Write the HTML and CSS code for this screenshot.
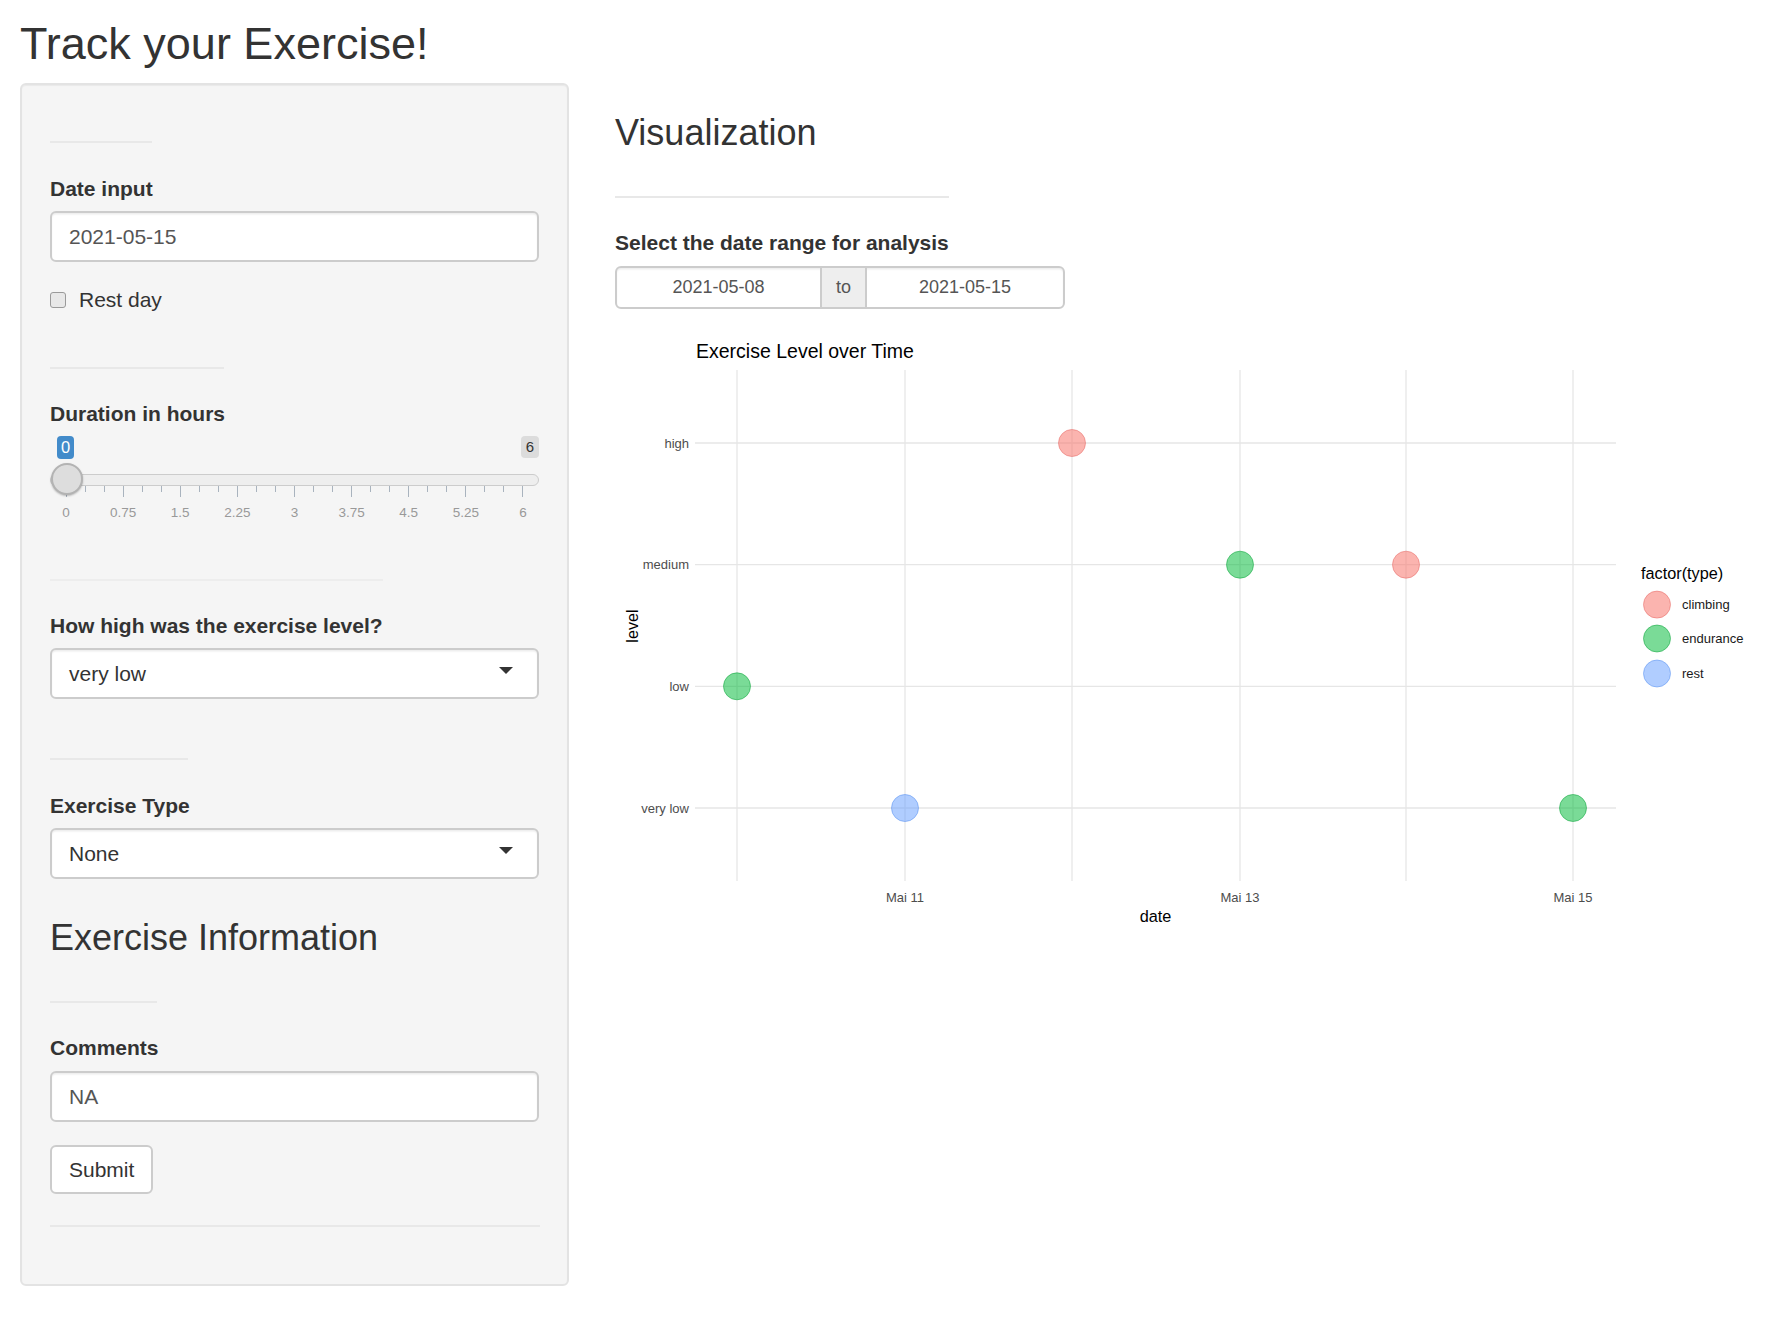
FILE: index.html
```html
<!DOCTYPE html>
<html lang="en">
<head>
<meta charset="utf-8">
<title>Track your Exercise!</title>
<link rel="stylesheet" href="styles.css">
</head>
<body>
<h2 class="page-title">Track your Exercise!</h2>
<div class="layout">
  <aside class="well">
    <hr class="rule rule-1">
    <label class="ctl-label lbl-date">Date input</label>
    <div class="text-input input-date">2021-05-15</div>
    <div class="check-row"><span class="check-box"></span><span>Rest day</span></div>
    <hr class="rule rule-2">
    <label class="ctl-label lbl-dur">Duration in hours</label>
    <div class="slider">
      <div class="irs-top"><span class="irs-single">0</span><span class="irs-max">6</span></div>
      <div class="irs-line"></div>
      <div class="irs-grid">
        <i class="tick major"></i><i class="tick"></i><i class="tick"></i>
        <i class="tick major"></i><i class="tick"></i><i class="tick"></i>
        <i class="tick major"></i><i class="tick"></i><i class="tick"></i>
        <i class="tick major"></i><i class="tick"></i><i class="tick"></i>
        <i class="tick major"></i><i class="tick"></i><i class="tick"></i>
        <i class="tick major"></i><i class="tick"></i><i class="tick"></i>
        <i class="tick major"></i><i class="tick"></i><i class="tick"></i>
        <i class="tick major"></i><i class="tick"></i><i class="tick"></i>
        <i class="tick major"></i>
      </div>
      <div class="irs-labels">
        <span class="gl"><span>0</span></span>
        <span class="gl"><span>0.75</span></span>
        <span class="gl"><span>1.5</span></span>
        <span class="gl"><span>2.25</span></span>
        <span class="gl"><span>3</span></span>
        <span class="gl"><span>3.75</span></span>
        <span class="gl"><span>4.5</span></span>
        <span class="gl"><span>5.25</span></span>
        <span class="gl"><span>6</span></span>
      </div>
      <span class="irs-handle"></span>
    </div>
    <hr class="rule rule-3">
    <label class="ctl-label lbl-level">How high was the exercise level?</label>
    <div class="select-box sel-level">very low</div>
    <hr class="rule rule-4">
    <label class="ctl-label lbl-type">Exercise Type</label>
    <div class="select-box sel-type">None</div>
    <h3 class="section-title">Exercise Information</h3>
    <hr class="rule rule-5">
    <label class="ctl-label lbl-comments">Comments</label>
    <div class="text-input input-comments">NA</div>
    <button class="btn" type="button">Submit</button>
    <hr class="rule rule-6">
  </aside>
  <main class="main">
    <h3 class="viz-title">Visualization</h3>
    <hr class="rule rule-viz">
    <label class="ctl-label lbl-range">Select the date range for analysis</label>
    <div class="daterange">
      <div class="dr-input dr-from">2021-05-08</div>
      <div class="dr-addon">to</div>
      <div class="dr-input dr-to">2021-05-15</div>
    </div>
    <svg class="plot" width="1150" height="620" viewBox="0 0 1150 620">
      <g class="grid">
        <line x1="122" y1="50" x2="122" y2="561"/>
        <line x1="290" y1="50" x2="290" y2="561"/>
        <line x1="457" y1="50" x2="457" y2="561"/>
        <line x1="625" y1="50" x2="625" y2="561"/>
        <line x1="791" y1="50" x2="791" y2="561"/>
        <line x1="958" y1="50" x2="958" y2="561"/>
        <line x1="80" y1="123" x2="1001" y2="123"/>
        <line x1="80" y1="244.7" x2="1001" y2="244.7"/>
        <line x1="80" y1="366.3" x2="1001" y2="366.3"/>
        <line x1="80" y1="488" x2="1001" y2="488"/>
      </g>
      <g class="points">
        <circle class="pt-endurance" cx="122" cy="366.3" r="13.5"/>
        <circle class="pt-rest" cx="290" cy="488" r="13.5"/>
        <circle class="pt-climbing" cx="457" cy="123" r="13.5"/>
        <circle class="pt-endurance" cx="625" cy="244.7" r="13.5"/>
        <circle class="pt-climbing" cx="791" cy="244.7" r="13.5"/>
        <circle class="pt-endurance" cx="958" cy="488" r="13.5"/>
      </g>
      <text class="plot-title" x="81" y="38">Exercise Level over Time</text>
      <g class="axis-text">
        <text x="74" y="127.5" text-anchor="end">high</text>
        <text x="74" y="249.2" text-anchor="end">medium</text>
        <text x="74" y="370.8" text-anchor="end">low</text>
        <text x="74" y="492.5" text-anchor="end">very low</text>
        <text x="290" y="582" text-anchor="middle">Mai 11</text>
        <text x="625" y="582" text-anchor="middle">Mai 13</text>
        <text x="958" y="582" text-anchor="middle">Mai 15</text>
      </g>
      <text class="axis-title" x="540.5" y="602" text-anchor="middle">date</text>
      <text class="axis-title" transform="translate(22.5 306) rotate(-90)" text-anchor="middle">level</text>
      <text class="legend-title" x="1026" y="259">factor(type)</text>
      <circle class="pt-climbing" cx="1042" cy="284.6" r="13.5"/>
      <circle class="pt-endurance" cx="1042" cy="318.5" r="13.5"/>
      <circle class="pt-rest" cx="1042" cy="353.5" r="13.5"/>
      <g class="legend-text">
        <text x="1067" y="289">climbing</text>
        <text x="1067" y="323">endurance</text>
        <text x="1067" y="358">rest</text>
      </g>
    </svg>
  </main>
</div>
</body>
</html>
```
FILE: styles.css
```css
html, body {
  margin: 0;
  padding: 0;
  background: #fff;
}

body {
  font-family: "Liberation Sans", Arial, Helvetica, sans-serif;
  font-size: 21px;
  line-height: 30px;
  color: #333;
}

.page-title {
  margin: 19px 0 0 20px;
  font-size: 45px;
  line-height: 49.5px;
  height: 49.5px;
  font-weight: normal;
}

.layout {
  display: flex;
  align-items: flex-start;
  gap: 46px;
  margin-top: 14.5px;
  padding-left: 20px;
}

/* ---------- sidebar well ---------- */
.well {
  flex: 0 0 549px;
  width: 549px;
  box-sizing: border-box;
  background: #f5f5f5;
  border: 2px solid #e3e3e3;
  border-radius: 6px;
  box-shadow: inset 0 1px 1px rgba(0, 0, 0, 0.05);
  padding: 0 28px 57px;
}

.rule {
  display: block;
  height: 0;
  margin: 0;
  border: 0;
  border-top: 2px solid #e8e8e8;
}

.rule-1 { margin-top: 56px; width: 102px; }
.rule-2 { margin-top: 52px; width: 174px; }
.rule-3 { margin-top: 57px; width: 333px; border-top-color: #ededed; }
.rule-4 { margin-top: 59px; width: 138px; }
.rule-5 { margin-top: 44.4px; width: 107px; }
.rule-6 { margin-top: 31px; width: 490px; }

.ctl-label {
  display: block;
  font-weight: bold;
  font-size: 21px;
  line-height: 30px;
}

.lbl-date { margin-top: 31px; }
.lbl-dur { margin-top: 30px; }
.lbl-level { margin-top: 30px; }
.lbl-type { margin-top: 31px; }
.lbl-comments { margin-top: 30px; }

.text-input,
.select-box {
  height: 51px;
  box-sizing: border-box;
  background: #fff;
  border: 2px solid #cccccc;
  border-radius: 6px;
  box-shadow: inset 0 1.5px 1.5px rgba(0, 0, 0, 0.075);
  padding: 0 17px;
  font-size: 21px;
  line-height: 47px;
  color: #555;
}

.input-date { margin-top: 7px; }
.input-comments { margin-top: 8px; }

.select-box {
  position: relative;
  color: #333;
}

.select-box::after {
  content: "";
  position: absolute;
  right: 24px;
  top: 17px;
  width: 0;
  height: 0;
  border-style: solid;
  border-width: 7.5px 7.5px 0 7.5px;
  border-color: #333 transparent transparent transparent;
}

.sel-level { margin-top: 7px; }
.sel-type { margin-top: 7px; }

.check-row {
  margin-top: 23px;
  height: 30px;
  display: flex;
  align-items: center;
  gap: 13px;
}

.check-box {
  width: 16px;
  height: 16px;
  box-sizing: border-box;
  border: 1px solid #9a9a9a;
  border-radius: 3px;
  background: #e8e8e8;
}

/* ---------- slider ---------- */
.slider {
  position: relative;
  margin-top: 7px;
}

.irs-top {
  display: flex;
  justify-content: space-between;
  align-items: flex-start;
  height: 23px;
  padding-left: 7px;
}

.irs-single {
  width: 17px;
  height: 23px;
  background: #428bca;
  color: #fff;
  font-size: 16.5px;
  line-height: 23px;
  text-align: center;
  border-radius: 4px;
}

.irs-max {
  width: 18px;
  height: 22px;
  background: rgba(0, 0, 0, 0.1);
  color: #333;
  font-size: 15px;
  line-height: 22px;
  text-align: center;
  border-radius: 4px;
}

.irs-line {
  margin-top: 15px;
  height: 12px;
  box-sizing: border-box;
  background: #eeeeee;
  border: 1px solid #cccccc;
  border-radius: 8px;
}

.irs-grid {
  display: flex;
  justify-content: space-between;
  align-items: flex-start;
  height: 12px;
  margin: 0 16px;
}

.tick {
  display: block;
  width: 1px;
  height: 6px;
  background: #a9b3be;
}

.tick.major {
  height: 11px;
}

.irs-labels {
  display: flex;
  justify-content: space-between;
  margin: 6px 16px 0;
  height: 18px;
  font-size: 13.5px;
  line-height: 18px;
  color: #999;
}

.gl {
  width: 0;
  display: flex;
  justify-content: center;
}

.irs-handle {
  position: absolute;
  left: 0.5px;
  top: 26.5px;
  width: 32px;
  height: 32px;
  box-sizing: border-box;
  border-radius: 50%;
  background: #dddddd;
  border: 2px solid #b3b3b3;
  box-shadow: 0 1px 2px rgba(0, 0, 0, 0.25);
}

/* ---------- headings / button ---------- */
.section-title {
  margin: 38.5px 0 0;
  font-size: 36px;
  line-height: 39.6px;
  font-weight: normal;
}

.btn {
  display: block;
  width: fit-content;
  margin-top: 23px;
  height: 49px;
  box-sizing: border-box;
  padding: 0 17px;
  background: #fff;
  border: 2px solid #cccccc;
  border-radius: 6px;
  font-family: "Liberation Sans", Arial, Helvetica, sans-serif;
  font-size: 21px;
  line-height: 45px;
  color: #333;
}

/* ---------- main panel ---------- */
.main {
  flex: 1 1 auto;
  min-width: 0;
}

.viz-title {
  margin: 29.7px 0 0;
  font-size: 36px;
  line-height: 39.6px;
  font-weight: normal;
}

.rule-viz {
  margin-top: 43.7px;
  width: 334px;
}

.lbl-range { margin-top: 30px; }

.daterange {
  margin-top: 8px;
  display: flex;
  width: 450px;
  height: 43px;
  box-sizing: border-box;
  border: 2px solid #cccccc;
  border-radius: 6px;
  background: #fff;
  box-shadow: inset 0 1.5px 1.5px rgba(0, 0, 0, 0.075);
  font-size: 18px;
  line-height: 39px;
  color: #555;
}

.dr-input {
  text-align: center;
}

.dr-from { width: 203px; }
.dr-to { flex: 1; }

.dr-addon {
  width: 47px;
  box-sizing: border-box;
  background: #eeeeee;
  border-left: 2px solid #cccccc;
  border-right: 2px solid #cccccc;
  text-align: center;
}

.plot {
  display: block;
  margin-top: 11px;
}

.plot text {
  font-family: "Liberation Sans", Arial, Helvetica, sans-serif;
}

.grid line {
  stroke: #e6e6e6;
  stroke-width: 1.3;
}

.pt-climbing {
  fill: rgba(248, 118, 109, 0.55);
  stroke: rgba(230, 100, 95, 0.5);
  stroke-width: 1;
}

.pt-endurance {
  fill: rgba(0, 186, 56, 0.52);
  stroke: rgba(0, 160, 50, 0.5);
  stroke-width: 1;
}

.pt-rest {
  fill: rgba(97, 156, 255, 0.5);
  stroke: rgba(80, 140, 240, 0.5);
  stroke-width: 1;
}

.plot-title {
  font-size: 19.5px;
  fill: #000;
}

.axis-text text {
  font-size: 13px;
  fill: #4d4d4d;
}

.axis-title {
  font-size: 16.25px;
  fill: #000;
}

.legend-title {
  font-size: 16.25px;
  fill: #000;
}

.legend-text text {
  font-size: 13px;
  fill: #1a1a1a;
}
```
